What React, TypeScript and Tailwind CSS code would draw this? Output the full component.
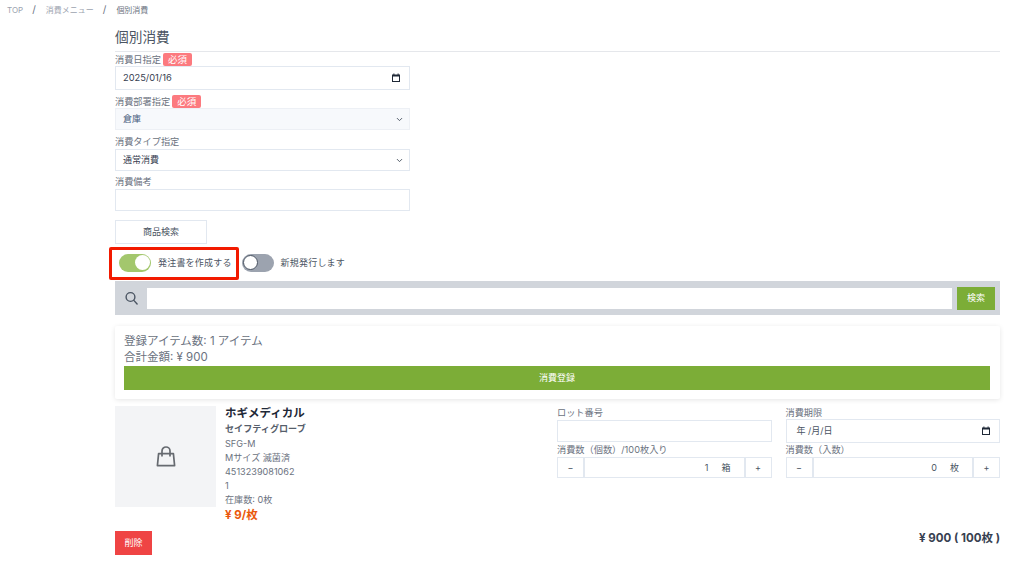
import { ChevronDown } from 'lucide-react';

const font = "font-['Inter','Noto_Sans_CJK_JP',sans-serif]";

function CalendarIcon() {
  return (
    <svg width="10" height="10" viewBox="0 0 10 10" className="shrink-0">
      <path d="M1 1.5h8v7.5h-8z M2 3.5v4.5h6v-4.5z" fill="#1f2937" fillRule="evenodd" />
      <rect x="2.4" y="0.5" width="1" height="1.5" fill="#1f2937" />
      <rect x="6.6" y="0.5" width="1" height="1.5" fill="#1f2937" />
    </svg>
  );
}

function SearchIcon() {
  return (
    <svg width="13" height="14" viewBox="0 0 13 14" fill="none" stroke="#4b5563" strokeWidth="1.4" className="shrink-0">
      <circle cx="5.5" cy="6" r="4.4" />
      <path d="M8.8 9.4l3.3 3.6" strokeLinecap="round" />
    </svg>
  );
}

function BagIcon() {
  return (
    <svg width="20" height="21" viewBox="0 0 20 21" fill="none" stroke="#666a70" strokeWidth="1.7" strokeLinejoin="round">
      <path d="M2.6 7.6h14.8l1.2 12h-17.2z" />
      <path d="M6 10.5v-5.5a4 4 0 0 1 8 0v5.5" />
    </svg>
  );
}

function Required() {
  return (
    <span className="ml-[2px] rounded-[2px] bg-[#fc7a7f] px-[5px] h-[13px] leading-[13px] text-[9.5px] text-white">必須</span>
  );
}

function Label({ children, className = '' }: { children: React.ReactNode; className?: string }) {
  return <div className={`flex items-center h-[13px] text-[9.2px] leading-[13px] text-[#6b7280] ${className}`}>{children}</div>;
}

function Stepper({ value, unit }: { value: string; unit: string }) {
  return (
    <div className="flex h-[21px] border border-[#e2e8f0] text-[9px] text-[#4b5563]">
      <div className="w-[27px] flex items-center justify-center border-r-2 border-[#e2e8f0]">−</div>
      <div className="flex-1 flex items-center justify-end">
        <span>{value}</span>
        <span className="ml-[13px] mr-[13px]">{unit}</span>
      </div>
      <div className="w-[27px] flex items-center justify-center border-l-2 border-[#e2e8f0]">+</div>
    </div>
  );
}

export default function App() {
  return (
    <div className={`relative w-[1024px] h-[564px] overflow-hidden bg-white ${font}`}>
      <div className="flex items-center h-[19px] pl-[7px] text-[8px] text-[#9ca3af]">
        <span>TOP</span>
        <span className="ml-[9px] text-[10px] text-[#6b7280]">/</span>
        <span className="ml-[10px]">消費メニュー</span>
        <span className="ml-[9px] text-[10px] text-[#6b7280]">/</span>
        <span className="ml-[10px] text-[#6b7280]">個別消費</span>
      </div>

      <div className="ml-[115px] w-[885px]">
        <h1 className="mt-[8px] h-[25px] text-[13.7px] leading-[20px] text-[#4b5563] border-b border-[#e5e7eb]">個別消費</h1>

        <div className="w-[295px]">
          <Label className="mt-[1px]">消費日指定<Required /></Label>
          <div className="h-[24px] flex items-center justify-between pl-[7px] pr-[8px] border border-[#e2e8f0] text-[9.3px] text-[#374151]">
            <span>2025/01/16</span>
            <CalendarIcon />
          </div>

          <Label className="mt-[5px]">消費部署指定<Required /></Label>
          <div className="h-[22px] flex items-center justify-between pl-[7px] pr-[5px] bg-[#f7f9fc] border border-[#edf0f5] text-[9px] text-[#4a5f80]">
            <span>倉庫</span>
            <ChevronDown size={9} strokeWidth={2.5} color="#4b5563" />
          </div>

          <Label className="mt-[5px]">消費タイプ指定</Label>
          <div className="mt-[1px] h-[22px] flex items-center justify-between pl-[7px] pr-[5px] border border-[#e2e8f0] text-[9px] text-[#374151]">
            <span>通常消費</span>
            <ChevronDown size={9} strokeWidth={2.5} color="#4b5563" />
          </div>

          <Label className="mt-[4px]">消費備考</Label>
          <div className="mt-[1px] h-[22px] border border-[#e2e8f0]" />

          <div className="mt-[9px] w-[92px] h-[24px] flex items-center justify-center border border-[#e2e8f0] text-[9px] text-[#4b5563]">商品検索</div>
        </div>

        <div className="relative mt-[10px] h-[17px] flex items-center text-[9px] text-[#4b5563]">
          <div className="ml-[4px] w-[32px] h-[18px] rounded-full bg-[#a3c76d] flex items-center justify-end pr-[1px]">
            <div className="w-[15px] h-[15px] rounded-full bg-white" />
          </div>
          <span className="ml-[7px] tracking-[0.2px]">発注書を作成する</span>
          <div className="ml-[10px] w-[32px] h-[18px] rounded-full bg-[#9ca3af] flex items-center pl-[1px]">
            <div className="w-[15px] h-[15px] rounded-full bg-white border border-[#4b5563]" />
          </div>
          <span className="ml-[7px] tracking-[0.2px]">新規発行します</span>
          <div className="absolute left-[-6px] top-[-7px] w-[130px] h-[33px] rounded-[2px] border-[3px] border-[#f21a00] pointer-events-none" />
        </div>

        <div className="mt-[10px] h-[34px] flex items-center bg-[#d1d5db] pl-[10px] pr-[5px]">
          <SearchIcon />
          <div className="ml-[9px] flex-1 h-[21px] bg-white" />
          <div className="ml-[5px] w-[38px] h-[23px] flex items-center justify-center bg-[#7cad37] text-[9px] text-white">検索</div>
        </div>

        <div className="mt-[11px] h-[73px] rounded-[2px] pt-[7px] pl-[9px] pr-[10px] shadow-[0_1px_5px_rgba(0,0,0,0.1)]">
          <div className="text-[11.5px] leading-[16px] text-[#6b7280]">登録アイテム数: 1 アイテム</div>
          <div className="text-[11.5px] leading-[16px] text-[#6b7280]">合計金額: ¥ 900</div>
          <div className="mt-[1px] h-[24px] flex items-center justify-center bg-[#7cad37] text-[9px] text-white">消費登録</div>
        </div>

        <div className="mt-[7px] flex">
          <div className="w-[101px] h-[101px] bg-[#f3f4f6] flex items-center justify-center shrink-0">
            <BagIcon />
          </div>
          <div className="ml-[9px] w-[332px] text-[9.1px] leading-[14px] text-[#6b7280]">
            <div className="text-[11.5px] leading-[15px] font-bold text-[#1f2937]">ホギメディカル</div>
            <div className="mt-[1px] font-bold text-[#565e6b]">セイフティグローブ</div>
            <div className="mt-[1px]">SFG-M</div>
            <div>Mサイズ 滅菌済</div>
            <div>4513239081062</div>
            <div>1</div>
            <div>在庫数: 0枚</div>
            <div className="text-[11.5px] leading-[16px] font-bold text-[#ea580c]">¥ 9/枚</div>
          </div>
          <div className="flex-1 grid grid-cols-2 gap-x-[14px] content-start">
            <div>
              <Label>ロット番号</Label>
              <div className="mt-[1px] h-[22px] border border-[#e2e8f0]" />
            </div>
            <div>
              <Label>消費期限</Label>
              <div className="h-[24px] flex items-center justify-between pl-[10px] pr-[8px] border border-[#e2e8f0] text-[9px] text-[#4b5563]">
                <span>年 /月/日</span>
                <CalendarIcon />
              </div>
            </div>
            <div>
              <Label>消費数（個数）/100枚入り</Label>
              <div className="mt-[1px]"><Stepper value="1" unit="箱" /></div>
            </div>
            <div>
              <Label>消費数（入数）</Label>
              <div className="mt-[1px]"><Stepper value="0" unit="枚" /></div>
            </div>
          </div>
        </div>

        <div className="mt-[8px] flex items-start justify-between">
          <div className="w-[37px] h-[24px] flex items-center justify-center bg-[#ef4444] text-[9px] text-white">削除</div>
          <div className="text-[11.5px] leading-[14px] font-bold text-[#374151]">¥ 900 ( 100枚 )</div>
        </div>
      </div>
    </div>
  );
}
